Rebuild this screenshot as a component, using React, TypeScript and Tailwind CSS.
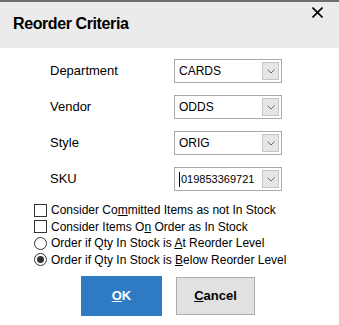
import { useState } from 'react';

const FIELDS = [
  { label: 'Department', value: 'CARDS' },
  { label: 'Vendor', value: 'ODDS' },
  { label: 'Style', value: 'ORIG' },
  { label: 'SKU', value: '019853369721', caret: true },
];

function Chevron() {
  return (
    <svg width="8" height="5" viewBox="0 0 8 5" className="block">
      <path d="M0.5 0.5 L4 4 L7.5 0.5" fill="none" stroke="#6d6d6d" strokeWidth="1" />
    </svg>
  );
}

function Combo({ value, caret }: { value: string; caret?: boolean }) {
  return (
    <div className="flex h-[24px] w-[108px] items-center border border-[#a9a9a9] bg-white pl-[4px] pr-[2px]">
      <span className={`flex flex-1 items-center text-black ${caret ? 'text-[11px]' : 'text-[12px]'}`}>
        {caret && <span className="mr-[1px] inline-block h-[15px] w-[1px] bg-black" />}
        {value}
      </span>
      <div className="flex h-[18px] w-[17px] items-center justify-center border border-[#c4c4c4] bg-[#e6e6e6]">
        <Chevron />
      </div>
    </div>
  );
}

function Box({ checked }: { checked: boolean }) {
  return (
    <span className="mr-[4px] flex h-[13px] w-[13px] shrink-0 items-center justify-center border border-[#333] bg-white">
      {checked && <span className="block h-[7px] w-[7px] bg-[#333]" />}
    </span>
  );
}

function Radio({ checked }: { checked: boolean }) {
  return (
    <span className="mr-[4px] flex h-[13px] w-[13px] shrink-0 items-center justify-center rounded-full border border-[#333] bg-white">
      {checked && <span className="block h-[7px] w-[7px] rounded-full bg-[#333]" />}
    </span>
  );
}

export default function App() {
  const [committed] = useState(false);
  const [onOrder] = useState(false);
  const [mode] = useState<'at' | 'below'>('below');

  return (
    <div className="h-[325px] w-[339px] overflow-hidden bg-white" style={{ fontFamily: '"Liberation Sans", Arial, sans-serif' }}>
      {/* Title bar */}
      <div className="flex h-[48px] items-start justify-between border-t-2 border-[#6e6e6e] bg-[#ebebeb]">
        <h1 className="pl-[13px] pt-[10px] text-[16px] font-bold leading-[24px] tracking-[-0.4px] text-black">Reorder Criteria</h1>
        <svg width="11" height="11" viewBox="0 0 11 11" className="mr-[16px] mt-[5px]">
          <path d="M0.5 0.5 L10.5 10.5 M10.5 0.5 L0.5 10.5" stroke="#000" strokeWidth="1.6" />
        </svg>
      </div>

      {/* Fields */}
      <div className="mt-[11px] flex flex-col gap-[12px] pl-[50px]">
        {FIELDS.map((f) => (
          <div key={f.label} className="flex items-center">
            <span className="w-[124px] text-[13px] text-black">{f.label}</span>
            <Combo value={f.value} caret={f.caret} />
          </div>
        ))}
      </div>

      {/* Options */}
      <div className="mt-[11px] flex flex-col pl-[34px] text-[12px] leading-[16.5px] text-black">
        <label className="flex items-center">
          <Box checked={committed} />
          <span>Consider Co<u>m</u>mitted Items as not In Stock</span>
        </label>
        <label className="flex items-center">
          <Box checked={onOrder} />
          <span>Consider Items O<u>n</u> Order as In Stock</span>
        </label>
        <label className="flex items-center">
          <Radio checked={mode === 'at'} />
          <span>Order if Qty In Stock is <u>A</u>t Reorder Level</span>
        </label>
        <label className="flex items-center">
          <Radio checked={mode === 'below'} />
          <span>Order if Qty In Stock is <u>B</u>elow Reorder Level</span>
        </label>
      </div>

      {/* Buttons */}
      <div className="mt-[8px] flex items-center pl-[81px]">
        <button className="h-[40px] w-[81px] bg-[#2e7bc4] text-[13px] font-bold text-white">
          <u>O</u>K
        </button>
        <button className="ml-[14px] h-[38px] w-[79px] border border-[#adadad] bg-[#e1e1e1] text-[13px] font-bold text-black">
          <u>C</u>ancel
        </button>
      </div>
    </div>
  );
}
